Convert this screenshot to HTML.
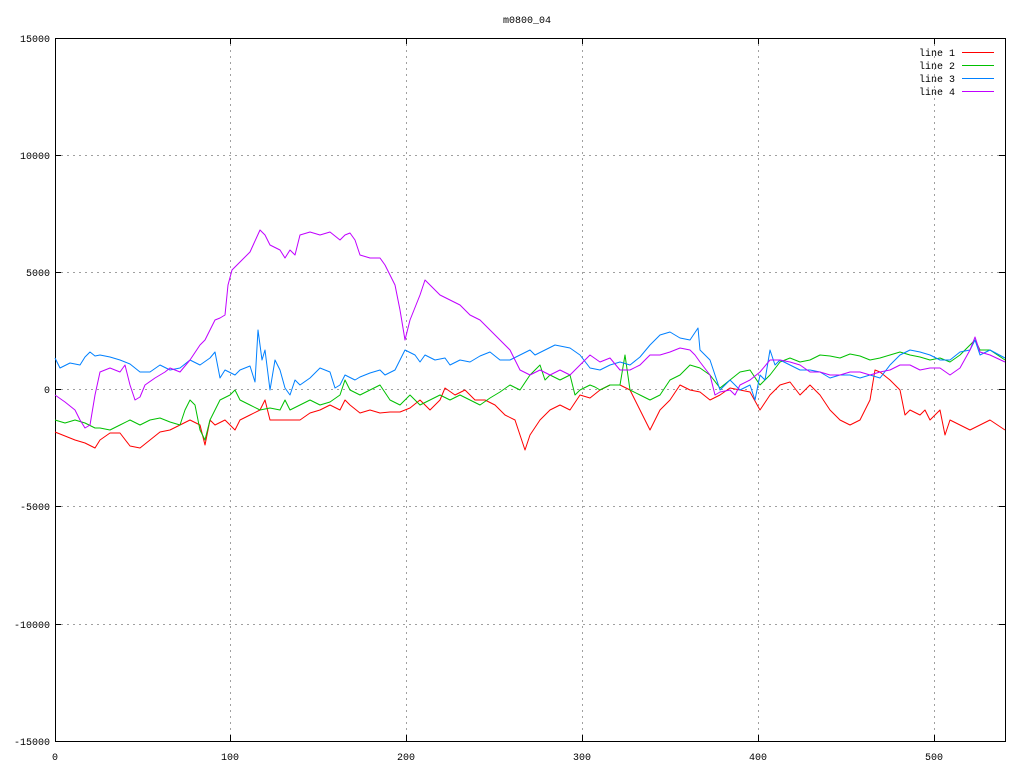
<!DOCTYPE html>
<html><head><meta charset="utf-8"><style>
html,body{margin:0;padding:0;background:#fff;}
svg{display:block;}
text{font-family:"Liberation Mono","DejaVu Sans Mono",monospace;font-size:10px;fill:#000;}
</style></head><body>
<svg width="1024" height="768" viewBox="0 0 1024 768" xmlns="http://www.w3.org/2000/svg">
<rect width="1024" height="768" fill="#fff"/>
<g stroke="#a0a0a0" stroke-width="1" stroke-dasharray="2,4" fill="none">
<line x1="55" y1="155.5" x2="1005" y2="155.5"/>
<line x1="55" y1="272.5" x2="1005" y2="272.5"/>
<line x1="55" y1="389.5" x2="1005" y2="389.5"/>
<line x1="55" y1="506.5" x2="1005" y2="506.5"/>
<line x1="55" y1="624.5" x2="1005" y2="624.5"/>
<line x1="230.5" y1="38" x2="230.5" y2="741"/>
<line x1="406.5" y1="38" x2="406.5" y2="741"/>
<line x1="582.5" y1="38" x2="582.5" y2="741"/>
<line x1="758.5" y1="38" x2="758.5" y2="741"/>
<line x1="934.5" y1="38" x2="934.5" y2="741"/>
</g>
<rect x="55.5" y="38.5" width="950" height="703" fill="none" stroke="#000"/>
<g stroke="#000">
<line x1="55" y1="155.5" x2="61" y2="155.5"/><line x1="999" y1="155.5" x2="1005" y2="155.5"/>
<line x1="55" y1="272.5" x2="61" y2="272.5"/><line x1="999" y1="272.5" x2="1005" y2="272.5"/>
<line x1="55" y1="389.5" x2="61" y2="389.5"/><line x1="999" y1="389.5" x2="1005" y2="389.5"/>
<line x1="55" y1="506.5" x2="61" y2="506.5"/><line x1="999" y1="506.5" x2="1005" y2="506.5"/>
<line x1="55" y1="624.5" x2="61" y2="624.5"/><line x1="999" y1="624.5" x2="1005" y2="624.5"/>
<line x1="230.5" y1="741" x2="230.5" y2="735"/><line x1="230.5" y1="38" x2="230.5" y2="44"/>
<line x1="406.5" y1="741" x2="406.5" y2="735"/><line x1="406.5" y1="38" x2="406.5" y2="44"/>
<line x1="582.5" y1="741" x2="582.5" y2="735"/><line x1="582.5" y1="38" x2="582.5" y2="44"/>
<line x1="758.5" y1="741" x2="758.5" y2="735"/><line x1="758.5" y1="38" x2="758.5" y2="44"/>
<line x1="934.5" y1="741" x2="934.5" y2="735"/><line x1="934.5" y1="38" x2="934.5" y2="44"/>
</g>
<g text-anchor="end">
<text x="50" y="42">15000</text>
<text x="50" y="159">10000</text>
<text x="50" y="276">5000</text>
<text x="50" y="393">0</text>
<text x="50" y="510">-5000</text>
<text x="50" y="628">-10000</text>
<text x="50" y="745">-15000</text>
</g>
<g text-anchor="middle">
<text x="55" y="760">0</text>
<text x="230" y="760">100</text>
<text x="406" y="760">200</text>
<text x="582" y="760">300</text>
<text x="758" y="760">400</text>
<text x="934" y="760">500</text>
<text x="527" y="23">m0800_04</text>
</g>
<g text-anchor="end">
<text x="955" y="56">line 1</text>
<text x="955" y="69">line 2</text>
<text x="955" y="82">line 3</text>
<text x="955" y="95">line 4</text>
</g>
<g shape-rendering="crispEdges">
<line x1="962" y1="52.5" x2="994" y2="52.5" stroke="#ff0000"/>
<line x1="962" y1="65.5" x2="994" y2="65.5" stroke="#00c000"/>
<line x1="962" y1="78.5" x2="994" y2="78.5" stroke="#0080ff"/>
<line x1="962" y1="91.5" x2="994" y2="91.5" stroke="#c000ff"/>
</g>
<g fill="none" stroke-width="1" stroke-linejoin="round">
<polyline stroke="#ff0000" points="55,432 65,436 75,440 85,443 95,448 100,440 110,433 120,433 130,446 140,448 150,440 160,432 170,430 180,425 190,420 200,425 205,445 210,420 215,425 225,420 235,430 240,420 250,415 260,410 265,400 270,420 280,420 290,420 300,420 310,413 320,410 330,405 340,410 345,400 350,405 360,413 370,410 380,413 390,412 400,412 410,408 420,400 430,410 440,400 445,388 455,395 465,390 475,400 485,400 495,405 505,415 515,420 525,450 530,435 540,420 550,410 560,405 570,410 580,395 590,398 600,390 610,385 620,385 630,390 640,410 650,430 655,420 660,410 670,400 680,385 690,390 700,392 710,400 720,395 730,388 740,390 750,392 760,410 770,395 780,385 790,382 800,395 810,385 820,395 830,410 840,420 850,425 860,420 870,400 875,370 880,372 890,380 900,390 905,415 910,410 920,415 925,410 930,420 940,410 945,435 950,420 960,425 970,430 980,425 990,420 1005,430"/>
<polyline stroke="#00c000" points="55,420 65,423 75,420 85,423 95,428 100,428 110,430 120,425 130,420 140,425 150,420 160,418 170,422 180,425 185,410 190,400 195,405 200,430 205,440 210,420 220,400 230,395 235,390 240,400 250,405 260,410 270,408 280,410 285,400 290,410 300,405 310,400 320,405 330,402 340,395 345,380 350,390 360,395 370,390 380,385 390,400 400,405 410,395 420,405 430,400 440,395 450,400 460,395 470,400 480,405 490,398 500,392 510,385 520,390 530,375 540,365 545,380 550,375 560,380 570,375 575,395 580,390 590,385 595,387 600,390 610,385 620,385 625,355 630,390 640,395 650,400 660,395 670,380 680,375 690,365 700,368 710,375 720,388 730,380 740,372 750,370 760,385 770,375 780,362 790,358 800,362 810,360 820,355 830,356 840,358 850,354 860,356 870,360 880,358 890,355 900,352 910,355 920,357 930,360 940,358 950,362 960,355 970,345 975,340 980,350 990,350 1005,360"/>
<polyline stroke="#0080ff" points="55,358 60,368 70,363 80,365 85,357 90,352 95,356 100,355 110,357 120,360 130,364 140,372 150,372 160,365 170,370 180,368 190,360 200,365 210,358 215,352 220,378 225,370 235,375 240,370 245,368 250,366 255,382 258,330 262,360 265,350 270,390 275,360 280,370 285,388 290,395 295,380 300,385 310,378 320,368 330,372 335,388 340,385 345,375 355,380 360,377 370,373 380,370 385,375 395,370 400,360 405,350 415,355 420,362 425,355 435,360 445,358 450,365 460,360 470,362 480,356 490,352 500,360 510,360 520,355 530,350 535,355 545,350 555,345 570,348 580,355 590,368 600,370 610,365 620,362 630,365 640,357 650,345 660,335 670,332 680,338 690,340 698,328 700,350 710,360 720,390 730,380 740,390 750,385 755,400 760,375 765,380 770,350 775,365 780,360 790,365 800,370 810,370 820,372 830,378 840,375 850,375 860,378 870,375 880,378 890,365 900,355 910,350 920,352 930,355 940,360 950,360 960,352 970,350 975,340 980,355 990,350 1005,358"/>
<polyline stroke="#c000ff" points="55,395 65,402 75,410 80,420 85,428 90,425 95,395 100,372 110,368 120,372 125,365 130,385 135,400 140,397 145,385 155,378 165,372 170,368 180,372 190,360 200,345 205,340 210,330 215,320 220,318 225,315 228,285 232,270 240,262 250,252 260,230 265,235 270,245 280,250 285,258 290,250 295,255 300,235 310,232 320,235 330,232 340,240 345,235 350,233 355,240 360,255 370,258 380,258 385,265 390,275 395,285 400,310 405,340 410,320 420,295 425,280 430,285 440,295 450,300 460,305 470,315 480,320 490,330 500,340 510,350 520,370 530,375 540,370 550,375 560,370 570,375 580,365 590,355 600,362 610,358 620,370 630,370 640,365 650,355 660,355 670,352 680,348 690,350 695,355 700,362 710,375 715,395 720,392 730,390 735,395 740,385 750,380 760,372 770,360 780,360 790,362 800,365 810,372 820,372 830,375 840,375 850,372 860,372 870,375 880,372 890,370 900,365 910,365 920,370 930,368 940,368 950,375 960,368 970,350 975,337 980,352 990,355 1005,362"/>
</g>
</svg>
</body></html>
